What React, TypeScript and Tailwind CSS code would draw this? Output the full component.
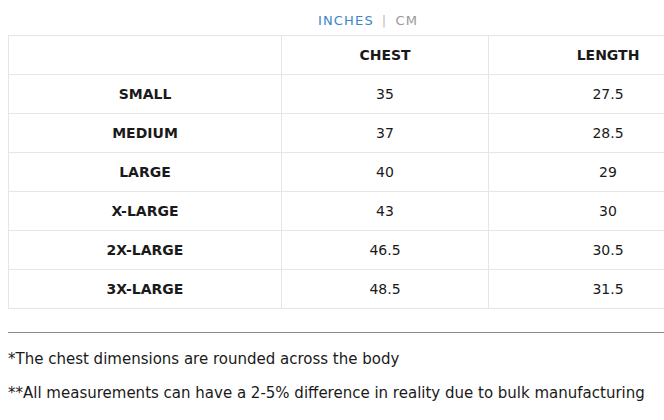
import React from "react";

const rows = [
  { size: "SMALL", chest: "35", length: "27.5" },
  { size: "MEDIUM", chest: "37", length: "28.5" },
  { size: "LARGE", chest: "40", length: "29" },
  { size: "X-LARGE", chest: "43", length: "30" },
  { size: "2X-LARGE", chest: "46.5", length: "30.5" },
  { size: "3X-LARGE", chest: "48.5", length: "31.5" },
];

const App: React.FC = () => {
  return (
    <div className="w-[664px] h-[420px] overflow-hidden bg-white">
      <div
        className="w-[736px] px-2 text-[#1a1a1a]"
        style={{ fontFamily: "'DejaVu Sans', sans-serif" }}
      >
        {/* Unit toggle */}
        <div className="h-[35px] flex items-center justify-center pt-[7px] text-[13px] tracking-[0.09em]">
          <span className="text-[#3d85c6]">INCHES</span>
          <span className="mx-2 text-[#bbb]">|</span>
          <span className="text-[#999]">CM</span>
        </div>

        {/* Size table */}
        <table className="w-[720px] border-collapse text-[14px]">
          <thead>
            <tr className="h-[39px]">
              <th className="w-[273px] border border-[#e6e6e6]"></th>
              <th className="w-[207px] border border-[#e6e6e6] font-bold">CHEST</th>
              <th className="border border-[#e6e6e6] font-bold">LENGTH</th>
            </tr>
          </thead>
          <tbody>
            {rows.map((r) => (
              <tr key={r.size} className="h-[39px] text-center">
                <td className="border border-[#e6e6e6] font-bold">{r.size}</td>
                <td className="border border-[#e6e6e6]">{r.chest}</td>
                <td className="border border-[#e6e6e6]">{r.length}</td>
              </tr>
            ))}
          </tbody>
        </table>

        <hr className="mt-[23px] border-t border-[#8a8a8a]" />

        {/* Notes */}
        <p className="mt-[15px] text-[15px]">*The chest dimensions are rounded across the body</p>
        <p className="mt-[11px] text-[15px]">
          **All measurements can have a 2-5% difference in reality due to bulk manufacturing
        </p>
      </div>
    </div>
  );
};

export default App;
